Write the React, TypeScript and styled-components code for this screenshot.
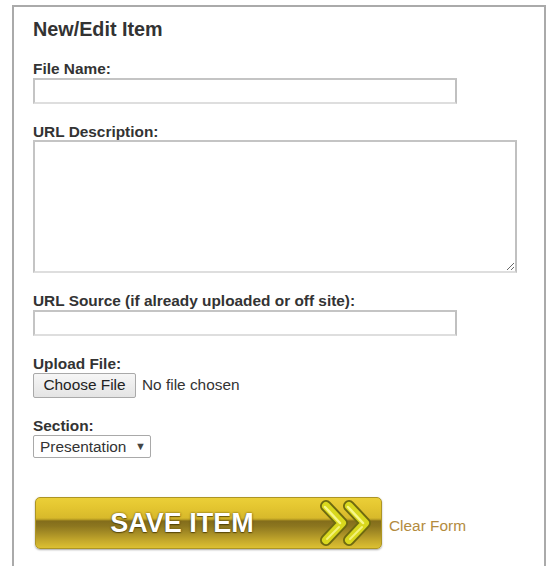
import React from "react";
import styled, { createGlobalStyle } from "styled-components";

const GlobalStyle = createGlobalStyle`
  html, body {
    margin: 0;
    padding: 0;
    background: #fff;
    overflow: hidden;
  }
  body {
    font-family: "Liberation Sans", Arial, sans-serif;
    color: #333;
  }
`;

const Panel = styled.section`
  box-sizing: border-box;
  width: 534px;
  min-height: 561px;
  margin: 5px 0 0 12px;
  padding: 11px 0 0 19px;
  border: 2px solid #aaa;
  border-bottom: none;
  background: #fff;
`;

const Title = styled.h2`
  margin: 0;
  font-size: 19.8px;
  line-height: 23px;
  font-weight: bold;
  color: #333;
`;

const Field = styled.div`
  margin-top: 19px;
`;

const Label = styled.label`
  display: block;
  font-size: 15.4px;
  line-height: 17.7px;
  font-weight: bold;
  color: #333;
`;

const TextInput = styled.input`
  display: block;
  box-sizing: border-box;
  width: 424px;
  height: 26px;
  margin: 0;
  padding: 2px 4px;
  border: 2px solid;
  border-color: #c4c4c4 #c0c0c0 #dedede #c4c4c4;
  background: #fff;
  font: 15.4px "Liberation Sans", Arial, sans-serif;
  outline: none;
`;

const TextArea = styled.textarea`
  display: block;
  box-sizing: border-box;
  width: 484px;
  height: 133px;
  margin: 0;
  padding: 2px 4px;
  border: 2px solid;
  border-color: #c4c4c4 #c0c0c0 #dedede #c4c4c4;
  background: #fff;
  font: 15.4px "Liberation Sans", Arial, sans-serif;
  outline: none;
`;

const FileRow = styled.div`
  display: flex;
  align-items: center;
  gap: 6px;
`;

const ChooseButton = styled.button`
  box-sizing: border-box;
  width: 103px;
  height: 25px;
  margin: 0;
  padding: 0;
  border: 1px solid #a9a9a9;
  border-radius: 2px;
  background: linear-gradient(to bottom, #f6f6f6, #e4e4e4);
  font: 15.4px "Liberation Sans", Arial, sans-serif;
  color: #222;
`;

const FileStatus = styled.span`
  font-size: 15.4px;
  color: #333;
`;

const SelectBox = styled.div`
  display: inline-flex;
  align-items: center;
  box-sizing: border-box;
  width: 118px;
  height: 23px;
  border: 1px solid #a9a9a9;
  border-radius: 2px;
  background: #fff;
`;

const Select = styled.select`
  appearance: none;
  -webkit-appearance: none;
  border: none;
  outline: none;
  background: transparent;
  margin: 0;
  padding: 0 0 0 6px;
  width: 99px;
  font: 15.4px "Liberation Sans", Arial, sans-serif;
  color: #333;
`;

const Caret = styled.span`
  font-size: 11px;
  line-height: 1;
  color: #444;
  margin-left: 2px;
`;

const Actions = styled.div`
  display: flex;
  align-items: center;
  margin-top: 39.5px;
`;

const SaveButton = styled.button`
  display: flex;
  align-items: center;
  box-sizing: border-box;
  width: 347px;
  height: 52px;
  margin: 0 0 0 2px;
  padding: 0 8px 0 11px;
  border: 1px solid #ad9524;
  border-radius: 5px;
  background: linear-gradient(
    to bottom,
    #ebcf38 0%,
    #e4c630 18%,
    #d8b92b 40%,
    #b99d23 43%,
    #836d1b 46%,
    #8c761f 56%,
    #a68d25 70%,
    #c6aa2c 86%,
    #dcc032 100%
  );
  box-shadow: 0 1px 2px rgba(0, 0, 0, 0.35);
  cursor: pointer;
`;

const SaveLabel = styled.span`
  flex: 1;
  text-align: center;
  font: bold 27px/1 "Liberation Sans", Arial, sans-serif;
  color: #fff;
  text-shadow: 0 0 2px rgba(70, 55, 0, 0.9), 0 1px 1px rgba(70, 55, 0, 0.7);
`;

const ClearLink = styled.a`
  margin-left: 7px;
  padding-top: 6px;
  font-size: 15.4px;
  color: #b38b3e;
  text-decoration: none;
  cursor: pointer;
`;

/* One glossy ">" of the save button's double arrow */
const Chevron = ({ dx }: { dx: number }) => (
  <g transform={`translate(${dx},0)`}>
    <path d="M9 6 L25 23 L9 40" fill="none" stroke="#6e6a10" strokeWidth={12} strokeLinecap="round" strokeLinejoin="round" />
    <path d="M9 6 L25 23 L9 40" fill="none" stroke="#d9d81e" strokeWidth={8} strokeLinecap="round" strokeLinejoin="round" />
    <path d="M8 7 L23 23" fill="none" stroke="#f7f78a" strokeWidth={2.5} strokeLinecap="round" />
    <path d="M10 39 L22 27" fill="none" stroke="#f4f27a" strokeWidth={2} strokeLinecap="round" />
  </g>
);

const Chevrons = () => (
  <svg width="56" height="46" viewBox="0 0 56 46" aria-hidden="true">
    <Chevron dx={0} />
    <Chevron dx={23} />
  </svg>
);

export default function App() {
  return (
    <>
      <GlobalStyle />
      <Panel>
        <Title>New/Edit Item</Title>
        <Field>
          <Label htmlFor="fileName">File Name:</Label>
          <TextInput id="fileName" type="text" />
        </Field>
        <Field>
          <Label htmlFor="urlDescription">URL Description:</Label>
          <TextArea id="urlDescription" />
        </Field>
        <Field>
          <Label htmlFor="urlSource">URL Source (if already uploaded or off site):</Label>
          <TextInput id="urlSource" type="text" />
        </Field>
        <Field>
          <Label>Upload File:</Label>
          <FileRow>
            <ChooseButton type="button">Choose File</ChooseButton>
            <FileStatus>No file chosen</FileStatus>
          </FileRow>
        </Field>
        <Field>
          <Label htmlFor="section">Section:</Label>
          <SelectBox>
            <Select id="section" defaultValue="presentation">
              <option value="presentation">Presentation</option>
            </Select>
            <Caret>▼</Caret>
          </SelectBox>
        </Field>
        <Actions>
          <SaveButton type="button">
            <SaveLabel>SAVE ITEM</SaveLabel>
            <Chevrons />
          </SaveButton>
          <ClearLink>Clear Form</ClearLink>
        </Actions>
      </Panel>
    </>
  );
}
